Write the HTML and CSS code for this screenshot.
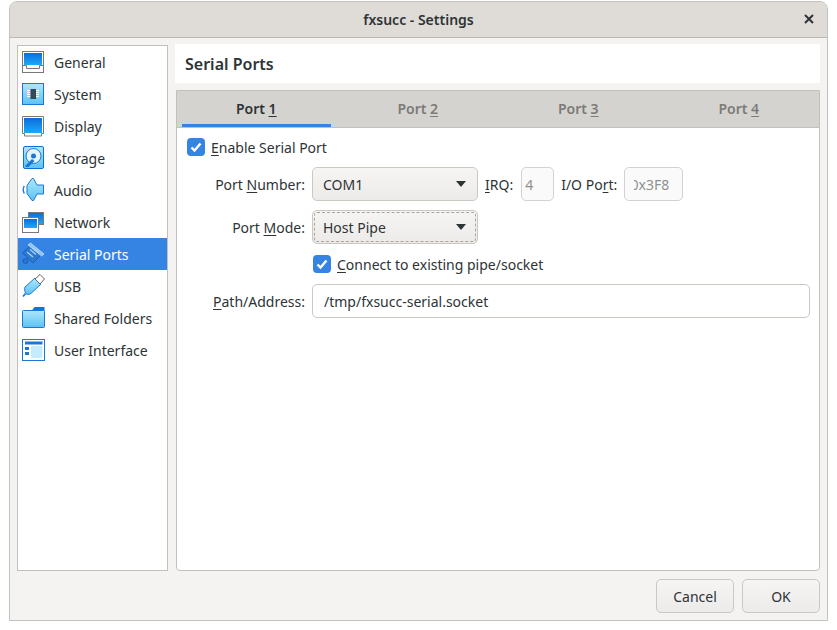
FILE: index.html
```html
<!DOCTYPE html>
<html lang="en">
<head>
    <meta charset="UTF-8">
    <title>fxsucc - Settings</title>
    <link rel="stylesheet" href="styles.css">
</head>
<body>
    <div class="window">
        <div class="titlebar">
            <span class="title">fxsucc - Settings</span>
            <svg class="close" width="10" height="10" viewBox="0 0 10 10"><path d="M1 1l8 8M9 1l-8 8" stroke="#2e3436" stroke-width="2" fill="none"/></svg>
        </div>
        <div class="content">
            <div class="columns">
                <ul class="sidebar">
                    <li class="item">
                        <svg class="icon" viewBox="0 0 24 24">
                            <defs>
                                <linearGradient id="screen" x1="0" y1="0" x2="0" y2="1"><stop offset="0" stop-color="#0a6cdc"/><stop offset="1" stop-color="#1eaaf6"/></linearGradient>
                                <linearGradient id="pale" x1="0" y1="0" x2="0" y2="1"><stop offset="0" stop-color="#aee8fc"/><stop offset="1" stop-color="#5cc2f2"/></linearGradient>
                            </defs>
                            <rect x="0.500" y="1.500" width="21" height="21" fill="#fff" stroke="#77787a"/>
                            <rect x="2" y="3" width="18" height="12" fill="url(#screen)"/>
                            <path d="M0.500 15.500h4v3h13v-3h4" fill="none" stroke="#77787a"/>
                        </svg>
                        General
                    </li>
                    <li class="item">
                        <svg class="icon" viewBox="0 0 24 24">
                            <rect x="0.500" y="1.500" width="21" height="21" fill="url(#pale)" stroke="#1b76d4"/>
                            <path d="M5 8.500h3.500M5 10.500h3.500M5 12.500h3.500M5 14.500h3.500M13.500 8.500H17M13.500 10.500H17M13.500 12.500H17M13.500 14.500H17" stroke="#fff"/>
                            <rect x="8.500" y="7" width="5.500" height="10" fill="#37475a"/>
                        </svg>
                        System
                    </li>
                    <li class="item">
                        <svg class="icon" viewBox="0 0 24 24">
                            <path d="M0.500 2.500h21v17h-2v2.500h-17v-2.500h-2z" fill="#fff" stroke="#77787a"/>
                            <rect x="2" y="4" width="18" height="15" fill="url(#screen)"/>
                        </svg>
                        Display
                    </li>
                    <li class="item">
                        <svg class="icon" viewBox="0 0 24 24">
                            <rect x="1.500" y="0.500" width="20" height="22" rx="1.500" fill="url(#pale)" stroke="#0f6fd0"/>
                            <circle cx="11.500" cy="10" r="7.500" fill="#e4f7fe" stroke="#1b76d4"/>
                            <circle cx="11.500" cy="10" r="2.500" fill="#1b76d4"/>
                            <path d="M3.500 19.500l6.500-6.500 2.500 2-6 6H3.500z" fill="#1b76d4"/>
                        </svg>
                        Storage
                    </li>
                    <li class="item">
                        <svg class="icon" viewBox="0 0 24 24">
                            <path d="M5 7.500L10 0.500h1.500L15 7h6.500v9H15l-3.500 6.500H10L5 15.500z" fill="url(#pale)" stroke="#1b76d4"/>
                            <path d="M2.300 8c-1.400 2.300-1.400 5 0 7.500" fill="none" stroke="#1b76d4" stroke-width="1.300"/>
                        </svg>
                        Audio
                    </li>
                    <li class="item">
                        <svg class="icon" viewBox="0 0 24 24">
                            <rect x="6.500" y="2.500" width="15" height="12" fill="url(#screen)" stroke="#77787a"/>
                            <rect x="0.500" y="7.500" width="16" height="15" fill="#fff" stroke="#77787a"/>
                            <rect x="2" y="9" width="13" height="9" fill="url(#screen)"/>
                        </svg>
                        Network
                    </li>
                    <li class="item selected">
                        <svg class="icon" viewBox="0 0 24 24">
                            <path d="M0.500 11L9 3l11 9-9 9z" fill="#2e77cf" stroke="#1762b8"/>
                            <path d="M8.500 1l13.500 11-2.500 2L6 3z" fill="#8fc4f2" stroke="#cfe6fb" stroke-width="0.700"/>
                            <path d="M5 10l6 5M8 7.500l6 5M10.500 5.500l6 5" stroke="#a8d4f7" stroke-width="1.300"/>
                            <circle cx="3.500" cy="19" r="2.500" fill="#2b76cc" stroke="#1762b8"/>
                        </svg>
                        Serial Ports
                    </li>
                    <li class="item">
                        <svg class="icon" viewBox="0 0 24 24">
                            <path d="M3 13L13 4l6 6-9.500 9c-2 1.800-4.500 1.800-5.500 0.500-1.300-1.500-1.800-4.500-1-6.500z" fill="url(#pale)" stroke="#1b76d4"/>
                            <path d="M13 5l5-4.500 4.500 4.500-4.500 5z" fill="#fff" stroke="#666"/>
                            <path d="M3.500 19.500L1 22.500" stroke="#1b76d4" stroke-width="1.800"/>
                        </svg>
                        USB
                    </li>
                    <li class="item">
                        <svg class="icon" viewBox="0 0 24 24">
                            <path d="M0.500 5h9l3-4h10v6H0.500z" fill="#1473d3"/>
                            <rect x="0.500" y="4.500" width="22" height="17" rx="1" fill="url(#pale)" stroke="#1b76d4"/>
                        </svg>
                        Shared Folders
                    </li>
                    <li class="item">
                        <svg class="icon" viewBox="0 0 24 24">
                            <rect x="0.500" y="1.500" width="22" height="21" fill="#fff" stroke="#1b76d4"/>
                            <rect x="3" y="3.500" width="17.500" height="3" fill="#1b76d4"/>
                            <rect x="3" y="9" width="4" height="3" fill="#1b76d4"/>
                            <rect x="3" y="14" width="4" height="3" fill="#1b76d4"/>
                            <rect x="9" y="8" width="11.500" height="12" fill="#c4ecfc"/>
                        </svg>
                        User Interface
                    </li>
                </ul>
                <div class="main">
                    <div class="page-title">Serial Ports</div>
                    <div class="tab-panel">
                        <div class="tabs">
                            <div class="tab active"><span class="tab-label">Port <u>1</u></span></div>
                            <div class="tab"><span class="tab-label">Port <u>2</u></span></div>
                            <div class="tab"><span class="tab-label">Port <u>3</u></span></div>
                            <div class="tab"><span class="tab-label">Port <u>4</u></span></div>
                        </div>
                        <div class="form">
                            <label class="check-row first">
                                <span class="checkbox"><svg width="16" height="16" viewBox="0 0 16 16"><path d="M3.500 8.500l3 3 6-7" fill="none" stroke="#fff" stroke-width="2.400"/></svg></span>
                                <span><u>E</u>nable Serial Port</span>
                            </label>
                            <div class="row">
                                <span class="label">Port <u>N</u>umber:</span>
                                <div class="combo"><span>COM1</span><i class="arrow"></i></div>
                                <span class="inline-label irq"><u>I</u>RQ:</span>
                                <div class="field small">4</div>
                                <span class="inline-label io">I/O Po<u>r</u>t:</span>
                                <div class="field port"><span class="clipped">0x3F8</span></div>
                            </div>
                            <div class="row mode">
                                <span class="label">Port <u>M</u>ode:</span>
                                <div class="combo focused"><span>Host Pipe</span><i class="arrow"></i></div>
                            </div>
                            <label class="check-row second">
                                <span class="checkbox"><svg width="16" height="16" viewBox="0 0 16 16"><path d="M3.500 8.500l3 3 6-7" fill="none" stroke="#fff" stroke-width="2.400"/></svg></span>
                                <span><u>C</u>onnect to existing pipe/socket</span>
                            </label>
                            <div class="row path">
                                <span class="label"><u>P</u>ath/Address:</span>
                                <div class="path-input">/tmp/fxsucc-serial.socket</div>
                            </div>
                        </div>
                    </div>
                </div>
            </div>
            <div class="buttons">
                <button class="btn">Cancel</button>
                <button class="btn">OK</button>
            </div>
        </div>
    </div>
</body>
</html>
```

FILE: styles.css
```css
html, body {
    margin: 0;
    height: 100%;
    background: #fff;
}

body {
    padding: 1px 9px 9px 9px;
    box-sizing: border-box;
    font-family: "Noto Sans", sans-serif;
    font-size: 14px;
    color: #2e3436;
}

u {
    text-underline-offset: 2px;
}

.window {
    height: 620px;
    box-sizing: border-box;
    border: 1px solid #c4c2be;
    border-radius: 8px 8px 0 0;
    background: #f4f3f1;
    display: flex;
    flex-direction: column;
    overflow: hidden;
}

.titlebar {
    height: 35px;
    flex: none;
    background: #dfdcd8;
    border-bottom: 1px solid #bfb8b1;
    display: flex;
    align-items: center;
    justify-content: center;
    position: relative;
}

.title {
    font-weight: 600;
    color: #2e3436;
}

.close {
    position: absolute;
    right: 13px;
    top: 12px;
}

.content {
    flex: 1;
    display: flex;
    flex-direction: column;
    padding: 7px 7px 0 7px;
    min-height: 0;
}

.columns {
    flex: 1;
    display: flex;
    gap: 7px;
    min-height: 0;
}

.sidebar {
    width: 149px;
    flex: none;
    margin: 0;
    padding: 0;
    list-style: none;
    background: #fff;
    border: 1px solid #c4bfb9;
}

.item {
    height: 32px;
    display: flex;
    align-items: center;
    gap: 8px;
    padding-left: 4px;
}

.item.selected {
    background: #3584e4;
    color: #fff;
}

.icon {
    width: 24px;
    height: 24px;
    flex: none;
    overflow: visible;
}

.main {
    flex: 1;
    display: flex;
    flex-direction: column;
    min-width: 0;
    margin-top: -1px;
}

.page-title {
    height: 39px;
    flex: none;
    background: #fff;
    padding-left: 10px;
    display: flex;
    align-items: center;
    font-size: 16px;
    font-weight: 600;
}

.tab-panel {
    flex: 1;
    margin: 7px 0 0 1px;
    background: #fff;
    border: 1px solid #c4bfb9;
    border-radius: 0 0 4px 4px;
}

.tabs {
    height: 36px;
    background: #d5d3d0;
    border-bottom: 1px solid #c4bfb9;
    display: flex;
}

.tab {
    flex: 1;
    display: flex;
    justify-content: center;
    padding: 0 6px;
}

.tab.active {
    padding: 0 7px 0 5px;
}

.tab-label {
    flex: 1;
    text-align: center;
    line-height: 35px;
    font-weight: 600;
    color: #7b7b78;
}

.tab.active .tab-label {
    color: #2e3436;
    box-shadow: inset 0 -3px 0 #3584e4;
}

.form {
    padding: 9px 9px 0 10px;
}

.check-row {
    display: flex;
    align-items: center;
    gap: 6px;
}

.check-row.first {
    height: 20px;
}

.check-row.second {
    height: 20px;
    margin: 10px 0 0 126px;
}

.checkbox {
    width: 18px;
    height: 18px;
    border-radius: 4px;
    background: #3584e4;
    display: flex;
    align-items: center;
    justify-content: center;
}

.row {
    display: flex;
    align-items: center;
    margin-top: 10px;
}

.label {
    width: 118px;
    flex: none;
    text-align: right;
    margin-right: 7px;
}

.combo {
    width: 166px;
    height: 34px;
    box-sizing: border-box;
    border: 1px solid #cdc7c2;
    border-radius: 5px;
    background: linear-gradient(#f6f5f4, #edebe9);
    display: flex;
    align-items: center;
    justify-content: space-between;
    padding: 0 11px 0 10px;
}

.combo.focused {
    outline: 1px dashed #a8a5a0;
    outline-offset: -3px;
}

.arrow {
    width: 0;
    height: 0;
    border-left: 5.500px solid transparent;
    border-right: 5.500px solid transparent;
    border-top: 6px solid #2e3436;
}

.inline-label.irq {
    margin-left: 7px;
}

.inline-label.io {
    margin-left: 7px;
}

.field {
    height: 34px;
    box-sizing: border-box;
    border: 1px solid #d5d2cd;
    border-radius: 5px;
    background: #fafafa;
    color: #8e9192;
    display: flex;
    align-items: center;
    overflow: hidden;
}

.field.small {
    width: 33px;
    margin-left: 8px;
    padding-left: 3px;
}

.field.port {
    width: 59px;
    margin-left: 7px;
    padding-left: 9px;
}

/* the spinbox is too narrow, the first digit gets cut off */
.clipped {
    width: 35px;
    flex: none;
    overflow: hidden;
    display: flex;
    justify-content: flex-end;
    white-space: nowrap;
}

.row.mode {
    margin-top: 9px;
}

.row.path {
    margin-top: 10px;
}

.path-input {
    flex: 1;
    height: 34px;
    box-sizing: border-box;
    border: 1px solid #cdc7c2;
    border-radius: 5px;
    background: #fff;
    display: flex;
    align-items: center;
    padding-left: 11px;
}

.buttons {
    flex: none;
    display: flex;
    justify-content: flex-end;
    gap: 8px;
    padding: 8px 0 7px 0;
}

.btn {
    width: 78px;
    height: 34px;
    border: 1px solid #cdc7c2;
    border-radius: 5px;
    background: linear-gradient(#f6f5f4, #edebe9);
    font-family: inherit;
    font-size: 14px;
    color: #2e3436;
    padding: 0;
}
```
